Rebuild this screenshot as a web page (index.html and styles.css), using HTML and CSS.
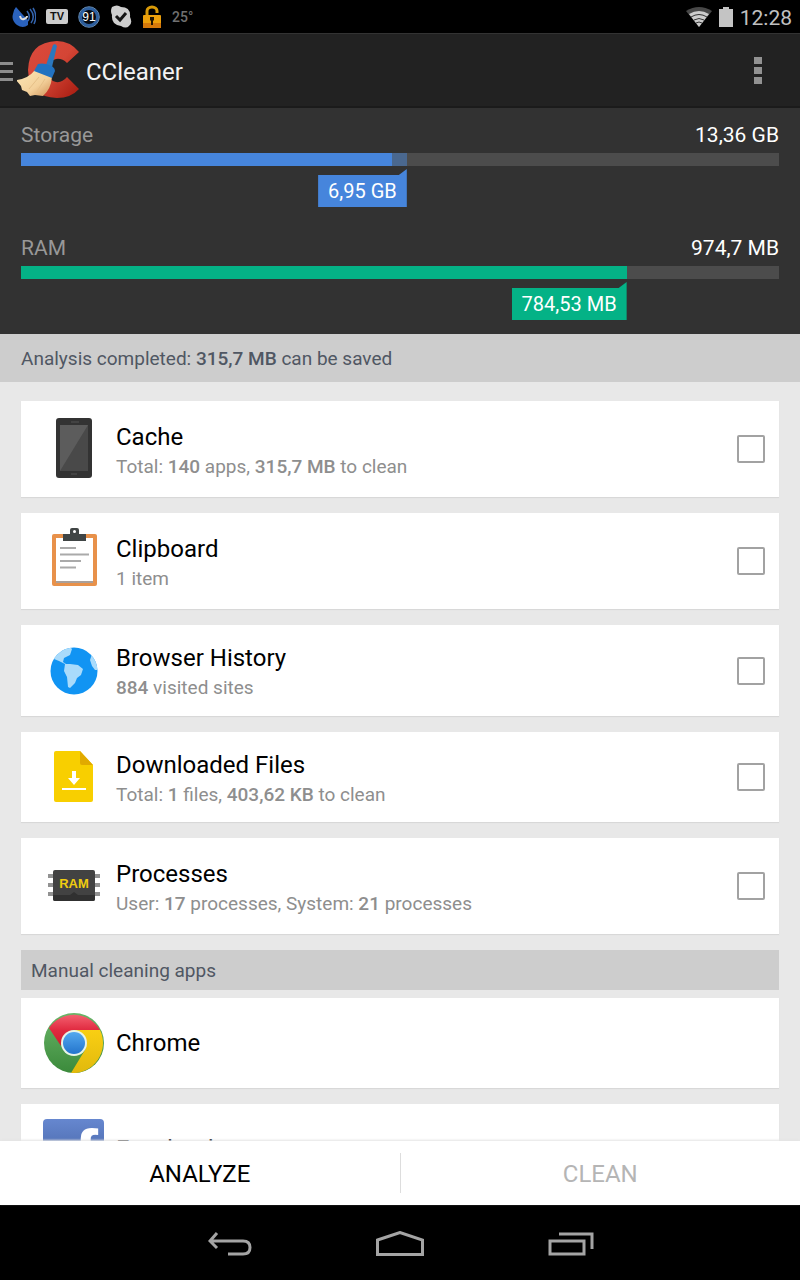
FILE: index.html
```html
<!DOCTYPE html>
<html lang="en">
<head>
<meta charset="utf-8">
<meta name="viewport" content="width=device-width, initial-scale=1">
<title>CCleaner</title>
<link rel="stylesheet" href="styles.css">
</head>
<body>
<div class="screen">
  <div class="status">
    <div class="status-left">
      <svg width="24" height="24" viewBox="0 0 24 24" fill="none"><path d="M4 2 11 10l5 5 0 5q-5 4-11 0-6-5-4-11 1-5 3-7Z" fill="#2a62bd"/><path d="M8 11q1 4 4 3 3-1 3-3" stroke="#ddd" stroke-width="2"/><path d="M15 6q4 5 1 10M18 4q6 7 1 14M21 3q5 8 1 16" stroke="#3464ad" stroke-width="1.5"/></svg>
      <span class="tv">TV</span>
      <svg width="22" height="24" viewBox="0 0 22 24"><circle cx="11" cy="12" r="8.500" fill="#050a12" stroke="#2d5f9f" stroke-width="3"/><circle cx="11" cy="12" r="10.300" fill="none" stroke="#79aade" stroke-width=".8"/><text x="11" y="16" text-anchor="middle" class="badge-text">91</text></svg>
      <svg width="22" height="24" viewBox="0 0 22 24"><path d="M2 2q5-3 9 0 10 0 9 10 3 6-1 9-3 3-8 0Q1 20 2 10 0 6 2 2Z" fill="#cecece"/><path d="m6 11 4 4 6-7" fill="none" stroke="#151515" stroke-width="3"/></svg>
      <svg width="20" height="24" viewBox="0 0 20 24"><path d="M5 11V6a5 4 0 0 1 10 0v2" fill="none" stroke="#d99a08" stroke-width="3"/><rect x="1" y="10" width="18" height="13" rx="1" fill="#eca00b"/><path d="M1 18h18v5H1Z" fill="#d5790b"/><path d="M8 12h4v3l-1 1v4H9v-4l-1-1Z" fill="#211500"/></svg>
      <span class="temp">25°</span>
    </div>
    <div class="status-right">
      <svg width="26" height="20" viewBox="0 0 26 20"><path d="M0 4Q13-4 26 4L13 20Z" fill="#484848"/><path d="M3 7q10-6 20 0L13 20Z" fill="#ccc"/><path d="M5 10q8-5 16 0M8 13q5-3 10 0M10 16q3-2 6 0" fill="none" stroke="#333" stroke-width="1"/></svg>
      <svg width="14" height="20" viewBox="0 0 14 20"><path d="M4 0h6v2h4v18H0V2h4Z" fill="#c4c4c4"/></svg>
      <time>12:28</time>
    </div>
  </div>

  <header class="appbar">
    <button class="menu" aria-label="Open menu"><span></span><span></span><span></span></button>
    <svg class="logo" width="64" height="58" viewBox="0 0 64 58">
      <defs><linearGradient id="red" x2="1" y2="1"><stop stop-color="#db4a3d"/><stop offset=".5" stop-color="#d44535"/><stop offset="1" stop-color="#a51a0f"/></linearGradient><linearGradient id="straw" x2="1" y2="1"><stop stop-color="#fce7b6"/><stop offset=".6" stop-color="#f3d09a"/><stop offset="1" stop-color="#d09258"/></linearGradient></defs>
      <path d="M62 11 50 22Q45 17 39 18q-9 2-9 12 1 9 9 11 6 1 11-5l12 12Q54 57 40 57 12 56 11 29 12 1 40 0q13 0 22 11Z" fill="url(#red)"/>
      <path d="m18 29 17 7q-1 12-9 19l-8-1-5 1-3-4-5-2-1-4-5-6Q11 38 18 29Z" fill="url(#straw)"/>
      <path d="m22 36-10 12m16-10-9 14" stroke="#e6c088" fill="none"/>
      <path d="m36 4 2-1 2 2-5 21-6-2Z" fill="#2c78bd"/>
      <path d="M21 23q4-1 8 0 9 2 9 7l-3 7-18-7Z" fill="#2272c0"/>
    </svg>
    <h1>CCleaner</h1>
    <button class="more" aria-label="More options"><span></span><span></span><span></span></button>
  </header>

  <section class="stats">
    <div class="storage">
      <div class="stat-head"><span>Storage</span><strong>13,36 GB</strong></div>
      <div class="track"><div class="reach" style="width:50.9%"></div><div class="fill" style="width:48.9%"></div></div>
      <div class="marker" style="width:50.9%"><span class="tag">6,95 GB</span></div>
    </div>
    <div class="ram">
      <div class="stat-head"><span>RAM</span><strong>974,7 MB</strong></div>
      <div class="track"><div class="fill" style="width:79.9%"></div></div>
      <div class="marker" style="width:79.9%"><span class="tag">784,53 MB</span></div>
    </div>
  </section>

  <p class="notice">Analysis completed: <b>315,7 MB</b> can be saved</p>

  <main class="list">
    <label class="card tall">
      <span class="icon raised"><svg width="36" height="60" viewBox="0 0 36 60"><rect width="36" height="60" rx="3" fill="#333"/><path d="M4 7h28v46H4Z" fill="#494949"/><path d="M4 7h28L4 53Z" fill="#5c5c5c"/><path d="M15 4h8M15 56h6" stroke="#555"/></svg></span>
      <span class="text"><span class="title">Cache</span><span class="sub">Total: <b>140</b> apps, <b>315,7 MB</b> to clean</span></span>
      <input type="checkbox">
    </label>
    <label class="card tall">
      <span class="icon raised"><svg width="46" height="64" viewBox="0 0 46 64"><rect x="1" y="6" width="45" height="52" rx="2" fill="#e8914a"/><path d="M5 10h37v43H5Z" fill="#fff"/><path d="M5 53h37v2H5Z" fill="#aaa09a"/><path d="M12 6h7V2q0-2 2-2h5q2 0 2 2v4h7v7H12Z" fill="#404545"/><circle cx="23.500" cy="3.500" r="1.500" fill="#fff"/><path d="M9 20h16M9 26.500h29M9 33h21M9 39.500h16" stroke="#aaa" stroke-width="2"/></svg></span>
      <span class="text"><span class="title">Clipboard</span><span class="sub">1 item</span></span>
      <input type="checkbox">
    </label>
    <label class="card history">
      <span class="icon"><svg width="48" height="48" viewBox="0 0 48 48"><defs><clipPath id="globe"><circle cx="24" cy="24" r="23.500"/></clipPath></defs><g clip-path="url(#globe)"><path d="M0 0h48v48H0Z" fill="#1194f3"/><path d="M3 13 11 0h9l2 2-2 6-6 3-1 4 3 2 4 0 8 1 5 4-2 6-4 3-2 5-5 5-2-1-1-10-3-6 1-7-6-3-5-2ZM42 7l-2 6 2 6 3 4 3 0V9Z" fill="#a9dbfb"/></g></svg></span>
      <span class="text"><span class="title">Browser History</span><span class="sub"><b>884</b> visited sites</span></span>
      <input type="checkbox">
    </label>
    <label class="card">
      <span class="icon"><svg width="40" height="52" viewBox="0 0 40 52"><path d="M2 0h24l13 14v35q0 2-2 2H2q-2 0-2-2V2q0-2 2-2Z" fill="#f8cf00"/><path d="M26 0v12q0 2 2 2h11Z" fill="#e1aa00"/><path d="M18 20h4v7h4l-6 7-6-7h4ZM8 37h24v2H8Z" fill="#fff"/></svg></span>
      <span class="text"><span class="title">Downloaded Files</span><span class="sub">Total: <b>1</b> files, <b>403,62 KB</b> to clean</span></span>
      <input type="checkbox">
    </label>
    <label class="card tall">
      <span class="icon"><svg width="52" height="32" viewBox="0 0 52 32"><path d="M0 6h52M0 15h52M0 24h52" stroke="#929292" stroke-width="4"/><rect x="5" y="0" width="42" height="31" rx="2" fill="#424242"/><path d="M5 25h17l4-3 4 3h17v4q0 2-2 2H7q-2 0-2-2Z" fill="#303030"/><text x="26" y="18" text-anchor="middle" class="ram-text">RAM</text></svg></span>
      <span class="text"><span class="title">Processes</span><span class="sub">User: <b>17</b> processes, System: <b>21</b> processes</span></span>
      <input type="checkbox">
    </label>
    <h2>Manual cleaning apps</h2>
    <a class="card" href="#chrome">
      <span class="icon"><svg width="62" height="62" viewBox="0 0 62 62"><defs><linearGradient id="cr" x2="0" y2="1"><stop stop-color="#f3606f"/><stop offset=".5" stop-color="#e0293f"/><stop offset="1" stop-color="#ce1d2c"/></linearGradient><linearGradient id="cg" x2="0" y2="1"><stop stop-color="#69b568"/><stop offset="1" stop-color="#3b8a3b"/></linearGradient><linearGradient id="cy" x2="0" y2="1"><stop stop-color="#f9cf13"/><stop offset="1" stop-color="#e1b90d"/></linearGradient><linearGradient id="cb" x2="0" y2="1"><stop stop-color="#53a8ef"/><stop offset="1" stop-color="#2475cc"/></linearGradient></defs><circle cx="31" cy="31" r="30" fill="url(#cg)"/><path d="M6 16A30 30 0 0 1 57 18H31q-12 2-13 16Z" fill="url(#cr)"/><path d="M31 18h26a30 30 0 0 1-29 43l14-23q5-12-11-20Z" fill="url(#cy)"/><circle cx="31" cy="31" r="13" fill="#e8f4e8"/><circle cx="31" cy="31" r="11" fill="url(#cb)"/></svg></span>
      <span class="title">Chrome</span>
    </a>
    <a class="card" href="#facebook">
      <span class="icon"><svg width="62" height="60" viewBox="0 0 62 60"><defs><linearGradient id="fb" x2="0" y2="1"><stop stop-color="#6687cf"/><stop offset="1" stop-color="#3b5998"/></linearGradient></defs><rect width="61" height="60" rx="4" fill="url(#fb)"/><text x="31" y="62" class="fb-text">f</text></svg></span>
      <span class="title">Facebook</span>
    </a>
  </main>

  <div class="actions">
    <button>ANALYZE</button>
    <button disabled>CLEAN</button>
  </div>

  <nav class="nav">
    <button aria-label="Back"><svg width="44" height="28" viewBox="0 0 44 28"><path d="m9 2-7 8 7 7M3 10h32q7 0 7 6.500T35 23H20"/></svg></button>
    <button aria-label="Home"><svg width="48" height="28" viewBox="0 0 48 28"><path d="M1.500 9 24 1.500 46.500 9v14.500h-45Z"/></svg></button>
    <button aria-label="Recent apps"><svg width="46" height="28" viewBox="0 0 46 28"><path d="M2 10h34v13H2ZM11 3h33v15"/></svg></button>
  </nav>
</div>
</body>
</html>
```
FILE: styles.css
```css
* { box-sizing: border-box; }
body { margin: 0; font-family: Roboto, "Noto Sans", sans-serif; background: #000; }
button { border: 0; background: none; padding: 0; font: inherit; color: inherit; }
svg { display: block; flex: none; }

.screen { display: flex; flex-direction: column; height: 100vh; overflow: hidden; background: #e8e8e8; }
.screen > * { flex: none; }

.status { display: flex; justify-content: space-between; height: 33px; padding: 0 8px 0 12px; background: #000; color: #c0c0c0; }
.status-left, .status-right { display: flex; align-items: center; gap: 10px; }
.status-right { gap: 7px; }
.status time { padding-top: 2px; font-size: 21px; }
.tv { width: 22px; height: 15px; border-radius: 2px; background: #ccc; color: #111; font: bold 11px/15px "Liberation Sans", sans-serif; text-align: center; }
.badge-text { fill: #fff; font: 12px "Liberation Sans", sans-serif; }
.temp { color: #707070; font-size: 14px; font-weight: 500; }

.appbar { display: flex; align-items: center; height: 75px; padding-right: 38px; background: #222; border-top: 1px solid #333; border-bottom: 2px solid #1b1b1b; color: #f3f3f3; }
.menu { display: grid; gap: 5px; width: 13px; padding-top: 2px; }
.menu span { height: 3px; background: #8d8d8d; }
.logo { margin-left: 4px; }
h1 { flex: 1; margin: 0 0 0 5px; padding-top: 4px; font-size: 24px; line-height: 30px; font-weight: 400; }
.more { display: grid; gap: 3px; }
.more span { width: 8px; height: 7px; background: #929292; }

.stats { display: grid; gap: 29px; padding: 15px 21px 14px; background: #323232; }
.storage { --tone: #4685dc; }
.ram { --tone: #04b286; }
.stat-head { display: flex; justify-content: space-between; margin-bottom: 5px; color: #989898; font-size: 21px; line-height: 25px; }
.stat-head strong { color: #fff; font-weight: 400; }
.track { display: grid; height: 13px; background: #4c4c4c; }
.track > * { grid-area: 1 / 1; background: var(--tone); }
.track .reach { background: #4a688f; }
.marker { display: flex; justify-content: flex-end; margin-top: 3px; }
.tag { padding: 5px 10px 0; height: 38px; background: var(--tone); clip-path: polygon(0 6px, calc(100% - 8px) 6px, 100% 0, 100% 100%, 0 100%); color: #fff; font-size: 20px; line-height: 34px; }

.notice { margin: 0; padding: 1px 21px 0; background: #cdcdcd; color: #505763; font-size: 19px; line-height: 47px; }
b { font-weight: 500; }

.screen > .list { display: flex; flex: 1 1 0; flex-direction: column; gap: 16px; min-height: 0; overflow: hidden; padding: 19px 21px 0; }
.list > * { flex: none; }
.card { display: flex; align-items: center; gap: 11px; min-height: 90px; padding: 0 14px 0 22px; background: #fff; box-shadow: 0 1px 1px #d8d8d8; color: #000; text-decoration: none; }
.tall { min-height: 96px; }
.history { min-height: 91px; }
.icon { display: grid; place-items: center; width: 62px; }
.raised { padding-bottom: 3px; }
.text { display: grid; flex: 1; padding-top: 4px; }
.title { font-size: 24px; line-height: 30px; }
.sub { color: #8e8e8e; font-size: 19px; line-height: 29px; }
.card input { appearance: none; width: 28px; height: 28px; margin: 0; border: 2px solid #a2a2a2; border-radius: 2px; background: #fff; }
.card input:checked { background: #4685dc; }
h2 { margin: 0 0 -8px; padding: 1px 10px 0; background: #cdcdcd; color: #505763; font-size: 19px; line-height: 39px; font-weight: 400; }
.ram-text { fill: #f0cc10; font: bold 13px "Liberation Sans", sans-serif; }
.fb-text { fill: #fff; font: bold 72px "Liberation Sans", sans-serif; }

.actions { display: flex; align-items: center; height: 64px; background: #fff; box-shadow: 0 -1px 2px #e4e4e4; z-index: 1; }
.actions button { flex: 1; height: 40px; padding-top: 2px; color: #000; font-size: 24px; }
.actions button + button { border-left: 1px solid #ddd; color: #b5b5b5; }

.nav { display: flex; justify-content: center; align-items: center; gap: 124px; height: 75px; padding: 4px 0 0 2px; background: #000; }
.nav svg { fill: none; stroke: #a4a4a4; stroke-width: 3; }
```
